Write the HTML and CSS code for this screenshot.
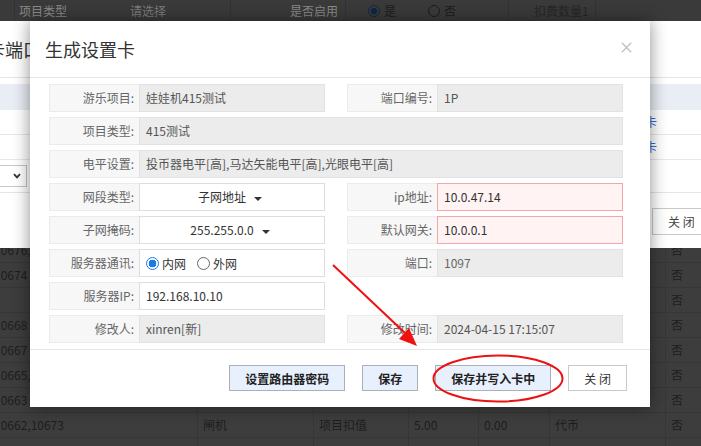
FILE: index.html
```html
<!DOCTYPE html>
<html lang="zh-CN">
<head>
<meta charset="utf-8">
<title>生成设置卡</title>
<link rel="stylesheet" href="styles.css">
</head>
<body>
<div class="page">
  <div class="topbar">
    <div class="tb-cell tb-edge"></div>
    <div class="tb-cell tb-label1">项目类型</div>
    <div class="tb-cell tb-select">请选择</div>
    <div class="tb-cell tb-label2">是否启用</div>
    <div class="tb-cell tb-radios">
      <span class="tb-radio on"></span><span class="tb-rtext">是</span>
      <span class="tb-radio off"></span><span class="tb-rtext">否</span>
    </div>
    <div class="tb-cell tb-label3">扣费数量1</div>
    <div class="tb-cell tb-rest"></div>
  </div>
  <div class="filler"></div>
  <div class="rows">
    <div class="c">10676,</div><div class="c"></div><div class="c"></div><div class="c"></div><div class="c"></div><div class="c"></div><div class="c">否</div>
    <div class="c">10674</div><div class="c"></div><div class="c"></div><div class="c"></div><div class="c"></div><div class="c"></div><div class="c">否</div>
    <div class="c"></div><div class="c"></div><div class="c"></div><div class="c"></div><div class="c"></div><div class="c"></div><div class="c">否</div>
    <div class="c">10668</div><div class="c"></div><div class="c"></div><div class="c"></div><div class="c"></div><div class="c"></div><div class="c">否</div>
    <div class="c">10667</div><div class="c"></div><div class="c"></div><div class="c"></div><div class="c"></div><div class="c"></div><div class="c">否</div>
    <div class="c">10665,</div><div class="c"></div><div class="c"></div><div class="c"></div><div class="c"></div><div class="c"></div><div class="c">否</div>
    <div class="c">10663</div><div class="c"></div><div class="c"></div><div class="c"></div><div class="c"></div><div class="c"></div><div class="c">否</div>
    <div class="c">10662,10673</div><div class="c">闸机</div><div class="c">项目扣值</div><div class="c">5.00</div><div class="c">0.00</div><div class="c">代币</div><div class="c">否</div>
    <div class="c"></div><div class="c"></div><div class="c"></div><div class="c"></div><div class="c"></div><div class="c"></div><div class="c"></div>
  </div>
</div>

<div class="modal-back">
  <div class="mb-head">置卡端口</div>
  <div class="mb-body">
    <div class="mb-thead"></div>
    <div class="mb-row"><span class="mb-link">设置卡</span></div>
    <div class="mb-row"><span class="mb-link">设置卡</span></div>
    <div class="mb-form">
      <div class="mb-select">
        <svg class="chev" width="8" height="6" viewBox="0 0 8 6"><path d="M1 1.2 L4 4.4 L7 1.2" fill="none" stroke="#333" stroke-width="1.8"/></svg>
      </div>
    </div>
  </div>
  <div class="mb-foot"><button class="btn-plain">关 闭</button></div>
</div>

<div class="modal">
  <div class="m-head">
    <span class="m-title">生成设置卡</span>
    <svg class="m-close" width="11" height="11" viewBox="0 0 11 11"><path d="M0.8 0.8 L10.2 10.2 M10.2 0.8 L0.8 10.2" stroke="#c2c2c2" stroke-width="1.4"/></svg>
  </div>
  <div class="m-body">
    <div class="field"><div class="f-label">游乐项目:</div><div class="f-value ro">娃娃机415测试</div></div>
    <div class="field"><div class="f-label">端口编号:</div><div class="f-value ro">1P</div></div>

    <div class="field wide"><div class="f-label">项目类型:</div><div class="f-value ro">415测试</div></div>

    <div class="field wide"><div class="f-label">电平设置:</div><div class="f-value ro">投币器电平[高],马达矢能电平[高],光眼电平[高]</div></div>

    <div class="field"><div class="f-label">网段类型:</div><div class="f-value sel">子网地址<span class="caret"></span></div></div>
    <div class="field"><div class="f-label">ip地址:</div><div class="f-value err">10.0.47.14</div></div>

    <div class="field"><div class="f-label">子网掩码:</div><div class="f-value sel">255.255.0.0<span class="caret"></span></div></div>
    <div class="field"><div class="f-label">默认网关:</div><div class="f-value err">10.0.0.1</div></div>

    <div class="field"><div class="f-label">服务器通讯:</div>
      <div class="f-value radios">
        <span class="radio on"></span><span class="r-text">内网</span>
        <span class="radio off"></span><span class="r-text">外网</span>
      </div>
    </div>
    <div class="field"><div class="f-label">端口:</div><div class="f-value ro light">1097</div></div>

    <div class="field"><div class="f-label">服务器IP:</div><div class="f-value">192.168.10.10</div></div>
    <div class="field empty"></div>

    <div class="field"><div class="f-label">修改人:</div><div class="f-value ro">xinren[新]</div></div>
    <div class="field"><div class="f-label">修改时间:</div><div class="f-value ro">2024-04-15 17:15:07</div></div>
  </div>
  <div class="m-foot">
    <button class="btn">设置路由器密码</button>
    <button class="btn">保存</button>
    <button class="btn">保存并写入卡中</button>
    <button class="btn btn-close">关 闭</button>
  </div>
</div>

<svg class="annot" width="701" height="446" viewBox="0 0 701 446">
  <line x1="333" y1="265" x2="405" y2="333" stroke="#f01010" stroke-width="2"/>
  <polygon points="417,346 399,339 409,328" fill="#f01010"/>
  <ellipse cx="498" cy="378.5" rx="64.5" ry="23" fill="none" stroke="#ee1111" stroke-width="2"/>
</svg>
</body>
</html>
```

FILE: styles.css
```css
* { box-sizing: border-box; }

html, body {
  margin: 0;
  padding: 0;
}

body {
  width: 701px;
  height: 446px;
  overflow: hidden;
  position: relative;
  background: #3d3d3d;
  font-family: "Noto Sans CJK SC", "Noto Sans", sans-serif;
  font-size: 12px;
}

/* ---------- dimmed background page ---------- */
.page {
  display: flex;
  flex-direction: column;
}

.topbar {
  height: 21px;
  display: flex;
  background: #3a3a3a;
  color: #8a8a8a;
  line-height: 21px;
}

.tb-cell {
  height: 21px;
  flex: none;
}

.tb-edge { width: 14px; }
.tb-label1 { width: 61px; padding-left: 4px; border-left: 1px solid #333; }
.tb-select { width: 155px; padding-left: 55px; color: #7c7c7c; }
.tb-label2 { width: 115px; text-align: right; padding-right: 7px; border-left: 1px solid #333; }
.tb-radios {
  width: 163px;
  padding-left: 22px;
  border-left: 1px solid #333;
  display: flex;
  align-items: center;
}
.tb-label3 { width: 87px; padding-left: 25px; border-left: 1px solid #333; color: #262626; }
.tb-rest { flex: 1; border-left: 1px solid #333; }

.tb-radio {
  width: 12px;
  height: 12px;
  border-radius: 50%;
  border: 1.5px solid #1b1b1b;
}
.tb-radio.on {
  border-color: #10294a;
  background: radial-gradient(circle, #0e2746 0 3px, #3a3a3a 3.5px);
}
.tb-rtext {
  color: #1c1c1c;
  margin-left: 4px;
  margin-right: 32px;
}

.filler { height: 217px; }

.rows {
  margin-left: -11px;
  width: 712px;
  display: grid;
  grid-template-columns: 208px 116px 95px 70px 71px 116px 1fr;
  grid-auto-rows: 25px;
}

.c {
  padding-left: 5px;
  line-height: 24px;
  border-bottom: 1px solid #363636;
  border-left: 1px solid #363636;
  color: #1d1d1d;
  white-space: nowrap;
  overflow: hidden;
}
.c:nth-child(7n+1) { border-left: none; }

/* ---------- first (back) modal ---------- */
.modal-back {
  position: absolute;
  left: -40px;
  top: 21px;
  width: 800px;
  height: 227px;
  background: #fff;
  z-index: 1;
}

.mb-head {
  height: 57px;
  border-bottom: 1px solid #e5e5e5;
  padding-left: 9px;
  font-size: 18px;
  line-height: 56px;
  color: #333;
  white-space: nowrap;
}

.mb-body { padding-top: 6px; }

.mb-thead {
  height: 26px;
  background: #e9edf4;
}

.mb-row {
  height: 25px;
  border-bottom: 1px solid #e8e8e8;
  padding-left: 661px;
  line-height: 24px;
}

.mb-link { color: #2f6cd8; }

.mb-form {
  height: 32px;
  padding: 5px 0 0 30px;
}

.mb-select {
  width: 37px;
  height: 22px;
  border: 1px solid #c6c6c6;
  display: flex;
  align-items: center;
  justify-content: flex-end;
  padding-right: 5px;
}

.mb-foot {
  border-top: 1px solid #e5e5e5;
  padding: 15px 0 0 692px;
}

.btn-plain {
  height: 27px;
  padding: 0 15px;
  border: 1px solid #c8c8c8;
  background: #fff;
  color: #444;
  font-family: inherit;
  font-size: 12px;
  white-space: nowrap;
}

/* ---------- main modal ---------- */
.modal {
  position: absolute;
  left: 30px;
  top: 21px;
  width: 620px;
  height: 386px;
  background: #fff;
  box-shadow: 0 0 16px rgba(0, 0, 0, 0.45);
  z-index: 2;
  display: flex;
  flex-direction: column;
}

.m-head {
  height: 57px;
  flex: none;
  border-bottom: 1px solid #e5e5e5;
  display: flex;
  align-items: center;
  justify-content: space-between;
  padding: 0 18px 0 15px;
}

.m-title {
  font-size: 18px;
  color: #333;
  line-height: 24px;
}

.m-close { margin-bottom: 3px; }

.m-body {
  flex: none;
  padding: 6px 27px 6px 19px;
  display: grid;
  grid-template-columns: 276px 276px;
  grid-auto-rows: 28px;
  column-gap: 22px;
  row-gap: 5px;
  border-bottom: 1px solid #e5e5e5;
}

.field { display: flex; }
.field.wide { grid-column: 1 / 3; }

.f-label {
  width: 90px;
  flex: none;
  background: #f7f7f7;
  border: 1px solid #ebebeb;
  border-right: none;
  text-align: right;
  padding-right: 5px;
  line-height: 26px;
  color: #666;
  white-space: nowrap;
}

.f-value {
  flex: 1;
  border: 1px solid #dedede;
  background: #fff;
  padding-left: 6px;
  line-height: 26px;
  color: #333;
  white-space: nowrap;
  overflow: hidden;
}

.f-value.ro {
  background: #ececec;
  border-color: #e2e2e2;
  color: #555;
}
.f-value.ro.light { color: #666; }

.f-value.err {
  background: #fff3f3;
  border-color: #f4a6a6;
}

.f-value.sel {
  text-align: center;
  padding-right: 10px;
}

.caret {
  display: inline-block;
  width: 0;
  height: 0;
  margin-left: 8px;
  border-left: 4px solid transparent;
  border-right: 4px solid transparent;
  border-top: 4px solid #333;
  vertical-align: middle;
}

.f-value.radios {
  display: flex;
  align-items: center;
  padding-top: 1px;
}

.radio {
  width: 13px;
  height: 13px;
  flex: none;
  border-radius: 50%;
  border: 1px solid #666;
}
.radio.on {
  border: 1.5px solid #1a7be6;
  background: radial-gradient(circle, #1a7be6 0 3.6px, #fff 4.1px);
}
.radio.off { margin-left: 11px; }

.r-text {
  margin-left: 3px;
  color: #333;
}

.m-foot {
  flex: 1;
  display: flex;
  justify-content: flex-end;
  align-items: flex-start;
  gap: 17px;
  padding: 15px 23px 0 0;
}

.btn {
  height: 26px;
  padding: 0 15px;
  border: 1px solid #a9b0ba;
  background: #e8f0fd;
  color: #222;
  font-family: inherit;
  font-size: 12px;
  font-weight: bold;
  white-space: nowrap;
}

.btn.btn-close {
  background: #fff;
  border-color: #c9c9c9;
  font-weight: normal;
  color: #333;
}

/* ---------- annotation overlay ---------- */
.annot {
  position: absolute;
  left: 0;
  top: 0;
  z-index: 3;
  pointer-events: none;
}
```
